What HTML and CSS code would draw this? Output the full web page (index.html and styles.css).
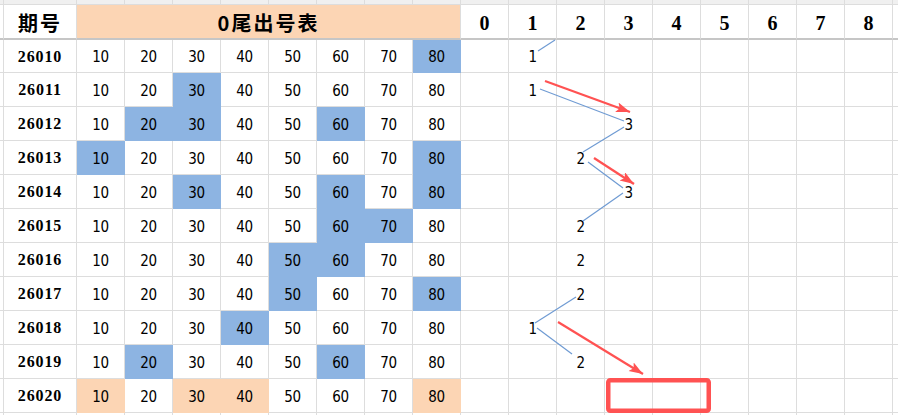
FILE: index.html
```html
<!DOCTYPE html>
<html lang="zh">
<head>
<meta charset="utf-8">
<title>0尾出号表</title>
<link rel="stylesheet" href="styles.css">
</head>
<body>
<div class="sheet">
  <div class="grid">
    <!-- top partial row -->
    <div class="c top"></div><div class="c top"></div>
    <div class="c top"></div><div class="c top"></div><div class="c top"></div><div class="c top"></div><div class="c top"></div><div class="c top"></div><div class="c top"></div><div class="c top"></div>
    <div class="c top"></div><div class="c top"></div><div class="c top"></div><div class="c top"></div><div class="c top"></div><div class="c top"></div><div class="c top"></div><div class="c top"></div><div class="c top"></div>
    <div class="c top"></div>

    <!-- header -->
    <div class="c h"></div>
    <div class="c h hcn">期号</div>
    <div class="c h hcn title">0尾出号表</div>
    <div class="c h hd">0</div><div class="c h hd">1</div><div class="c h hd">2</div><div class="c h hd">3</div><div class="c h hd">4</div><div class="c h hd">5</div><div class="c h hd">6</div><div class="c h hd">7</div><div class="c h hd">8</div>
    <div class="c h"></div>

    <!-- 26010 -->
    <div class="c"></div><div class="c id">26010</div>
    <div class="c v">10</div><div class="c v">20</div><div class="c v">30</div><div class="c v">40</div><div class="c v">50</div><div class="c v">60</div><div class="c v">70</div><div class="c v b">80</div>
    <div class="c"></div><div class="c v">1</div><div class="c"></div><div class="c"></div><div class="c"></div><div class="c"></div><div class="c"></div><div class="c"></div><div class="c"></div>
    <div class="c"></div>

    <!-- 26011 -->
    <div class="c"></div><div class="c id">26011</div>
    <div class="c v">10</div><div class="c v">20</div><div class="c v b">30</div><div class="c v">40</div><div class="c v">50</div><div class="c v">60</div><div class="c v">70</div><div class="c v">80</div>
    <div class="c"></div><div class="c v">1</div><div class="c"></div><div class="c"></div><div class="c"></div><div class="c"></div><div class="c"></div><div class="c"></div><div class="c"></div>
    <div class="c"></div>

    <!-- 26012 -->
    <div class="c"></div><div class="c id">26012</div>
    <div class="c v">10</div><div class="c v b">20</div><div class="c v b">30</div><div class="c v">40</div><div class="c v">50</div><div class="c v b">60</div><div class="c v">70</div><div class="c v">80</div>
    <div class="c"></div><div class="c"></div><div class="c"></div><div class="c v">3</div><div class="c"></div><div class="c"></div><div class="c"></div><div class="c"></div><div class="c"></div>
    <div class="c"></div>

    <!-- 26013 -->
    <div class="c"></div><div class="c id">26013</div>
    <div class="c v b">10</div><div class="c v">20</div><div class="c v">30</div><div class="c v">40</div><div class="c v">50</div><div class="c v">60</div><div class="c v">70</div><div class="c v b">80</div>
    <div class="c"></div><div class="c"></div><div class="c v">2</div><div class="c"></div><div class="c"></div><div class="c"></div><div class="c"></div><div class="c"></div><div class="c"></div>
    <div class="c"></div>

    <!-- 26014 -->
    <div class="c"></div><div class="c id">26014</div>
    <div class="c v">10</div><div class="c v">20</div><div class="c v b">30</div><div class="c v">40</div><div class="c v">50</div><div class="c v b">60</div><div class="c v">70</div><div class="c v b">80</div>
    <div class="c"></div><div class="c"></div><div class="c"></div><div class="c v">3</div><div class="c"></div><div class="c"></div><div class="c"></div><div class="c"></div><div class="c"></div>
    <div class="c"></div>

    <!-- 26015 -->
    <div class="c"></div><div class="c id">26015</div>
    <div class="c v">10</div><div class="c v">20</div><div class="c v">30</div><div class="c v">40</div><div class="c v">50</div><div class="c v b">60</div><div class="c v b">70</div><div class="c v">80</div>
    <div class="c"></div><div class="c"></div><div class="c v">2</div><div class="c"></div><div class="c"></div><div class="c"></div><div class="c"></div><div class="c"></div><div class="c"></div>
    <div class="c"></div>

    <!-- 26016 -->
    <div class="c"></div><div class="c id">26016</div>
    <div class="c v">10</div><div class="c v">20</div><div class="c v">30</div><div class="c v">40</div><div class="c v b">50</div><div class="c v b">60</div><div class="c v">70</div><div class="c v">80</div>
    <div class="c"></div><div class="c"></div><div class="c v">2</div><div class="c"></div><div class="c"></div><div class="c"></div><div class="c"></div><div class="c"></div><div class="c"></div>
    <div class="c"></div>

    <!-- 26017 -->
    <div class="c"></div><div class="c id">26017</div>
    <div class="c v">10</div><div class="c v">20</div><div class="c v">30</div><div class="c v">40</div><div class="c v b">50</div><div class="c v">60</div><div class="c v">70</div><div class="c v b">80</div>
    <div class="c"></div><div class="c"></div><div class="c v">2</div><div class="c"></div><div class="c"></div><div class="c"></div><div class="c"></div><div class="c"></div><div class="c"></div>
    <div class="c"></div>

    <!-- 26018 -->
    <div class="c"></div><div class="c id">26018</div>
    <div class="c v">10</div><div class="c v">20</div><div class="c v">30</div><div class="c v b">40</div><div class="c v">50</div><div class="c v">60</div><div class="c v">70</div><div class="c v">80</div>
    <div class="c"></div><div class="c v">1</div><div class="c"></div><div class="c"></div><div class="c"></div><div class="c"></div><div class="c"></div><div class="c"></div><div class="c"></div>
    <div class="c"></div>

    <!-- 26019 -->
    <div class="c"></div><div class="c id">26019</div>
    <div class="c v">10</div><div class="c v b">20</div><div class="c v">30</div><div class="c v">40</div><div class="c v">50</div><div class="c v b">60</div><div class="c v">70</div><div class="c v">80</div>
    <div class="c"></div><div class="c"></div><div class="c v">2</div><div class="c"></div><div class="c"></div><div class="c"></div><div class="c"></div><div class="c"></div><div class="c"></div>
    <div class="c"></div>

    <!-- 26020 -->
    <div class="c"></div><div class="c id">26020</div>
    <div class="c v p">10</div><div class="c v">20</div><div class="c v p">30</div><div class="c v p">40</div><div class="c v">50</div><div class="c v">60</div><div class="c v">70</div><div class="c v p">80</div>
    <div class="c"></div><div class="c"></div><div class="c"></div><div class="c"></div><div class="c"></div><div class="c"></div><div class="c"></div><div class="c"></div><div class="c"></div>
    <div class="c"></div>

    <!-- bottom partial row -->
    <div class="c"></div><div class="c"></div>
    <div class="c"></div><div class="c"></div><div class="c"></div><div class="c"></div><div class="c"></div><div class="c"></div><div class="c"></div><div class="c"></div>
    <div class="c"></div><div class="c"></div><div class="c"></div><div class="c"></div><div class="c"></div><div class="c"></div><div class="c"></div><div class="c"></div><div class="c"></div>
    <div class="c"></div>
  </div>

  <svg class="overlay" width="898" height="415" viewBox="0 0 898 415" xmlns="http://www.w3.org/2000/svg">
    <defs>
      <marker id="ah" markerUnits="userSpaceOnUse" markerWidth="16" markerHeight="12" refX="14" refY="5" orient="auto">
        <path d="M0,0 L14,5 L0,10 L3,5 Z" fill="#ff5252"/>
      </marker>
    </defs>
    <g class="trend">
      <line x1="538" y1="51" x2="555" y2="40"/>
      <line x1="540" y1="89" x2="624" y2="121"/>
      <line x1="624" y1="127" x2="583" y2="152"/>
      <line x1="588" y1="162" x2="623" y2="188"/>
      <line x1="623" y1="193" x2="583" y2="221"/>
      <line x1="576" y1="297" x2="535" y2="323"/>
      <line x1="537" y1="328" x2="572" y2="354"/>
    </g>
    <g class="arrows">
      <line x1="545" y1="81" x2="630" y2="112" marker-end="url(#ah)"/>
      <line x1="594" y1="158" x2="634" y2="184" marker-end="url(#ah)"/>
      <line x1="558" y1="322" x2="643" y2="374" marker-end="url(#ah)"/>
    </g>
    <rect class="box" x="608.25" y="380.25" width="100.5" height="30.5" rx="2"/>
  </svg>
</div>
</body>
</html>
```

FILE: styles.css
```css
html, body {
  margin: 0;
  padding: 0;
  background: #ffffff;
}

.sheet {
  position: relative;
  width: 898px;
  height: 415px;
  overflow: hidden;
  background: #ffffff;
}

.grid {
  display: grid;
  grid-template-columns: 4px 73px repeat(17, 48px) 6px;
  grid-template-rows: 5px 35px 33px repeat(10, 34px) 3px;
}

.c {
  box-sizing: border-box;
  border-right: 1px solid #dddddd;
  border-bottom: 1px solid #dddddd;
  display: flex;
  align-items: center;
  justify-content: center;
  color: #000000;
  white-space: nowrap;
  overflow: hidden;
}

.top {
  background: #f0f0f0;
}

.h {
  border-bottom: 2px solid #c6c6c6;
}

.hcn {
  font-family: "Noto Sans CJK SC", "Noto Sans", sans-serif;
  font-weight: 700;
  font-size: 20px;
  letter-spacing: 2px;
  padding-top: 1px;
}

.title {
  grid-column: span 8;
  background: #fcd5b4;
}

.hd {
  font-family: "Liberation Serif", serif;
  font-weight: 700;
  font-size: 20px;
  padding-top: 3px;
}

.id {
  font-family: "Liberation Serif", serif;
  font-weight: 700;
  font-size: 16px;
  letter-spacing: 0.9px;
  padding-top: 1px;
}

.v {
  font-family: "DejaVu Sans", sans-serif;
  font-stretch: semi-condensed;
  font-weight: 400;
  font-size: 15px;
  letter-spacing: -0.4px;
  padding-top: 2px;
}

.b {
  background: #8db4e2;
  border-color: #8db4e2;
}

.p {
  background: #fcd5b4;
  border-color: #fcd5b4;
}

.overlay {
  position: absolute;
  left: 0;
  top: 0;
  pointer-events: none;
}

.trend line {
  stroke: #6f9bd3;
  stroke-width: 1.2;
}

.arrows line {
  stroke: #ff5252;
  stroke-width: 2.2;
}

.box {
  fill: none;
  stroke: #ff5252;
  stroke-width: 4.5;
}
```
